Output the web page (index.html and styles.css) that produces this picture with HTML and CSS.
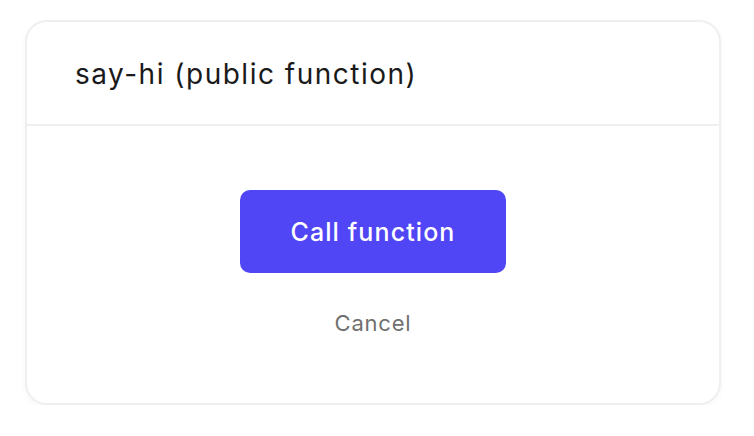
FILE: index.html
```html
<!DOCTYPE html>
<html>
<head>
<meta charset="utf-8">
<link rel="stylesheet" href="styles.css">
</head>
<body>
<div class="card">
  <div class="card-header">
    <h1 class="title">say-hi (public function)</h1>
  </div>
  <div class="card-body">
    <button class="btn-primary">Call function</button>
    <button class="btn-link">Cancel</button>
  </div>
</div>
</body>
</html>
```
FILE: styles.css
```css
html, body {
  margin: 0;
  padding: 0;
  background: #ffffff;
}
body {
  font-family: Inter, "Noto Sans", sans-serif;
  padding: 20px 33px 0 25px;
}
.card {
  width: 696px;
  height: 385px;
  box-sizing: border-box;
  border: 2px solid #efeff1;
  border-radius: 22px;
  background: #fff;
  box-shadow: 0 2px 6px rgba(0,0,0,0.04);
  display: flex;
  flex-direction: column;
}
.card-header {
  height: 104px;
  box-sizing: border-box;
  border-bottom: 2px solid #efeff1;
  display: flex;
  align-items: center;
  padding-left: 48px;
}
.title {
  margin: 0;
  font-size: 28px;
  font-weight: 400;
  letter-spacing: 1.5px;
  color: #1a1a1a;
  padding-top: 2px;
}
.card-body {
  flex: 1;
  display: flex;
  flex-direction: column;
  align-items: center;
  padding-top: 64px;
}
.btn-primary {
  width: 266px;
  height: 83px;
  border: none;
  border-radius: 10px;
  background: #5146f5;
  color: #fff;
  font-family: inherit;
  font-size: 25px;
  font-weight: 500;
  letter-spacing: 1.1px;
}
.btn-link {
  margin-top: 37px;
  border: none;
  background: none;
  color: #707070;
  font-family: inherit;
  font-size: 22px;
  letter-spacing: 0.8px;
  padding: 0;
}
```
